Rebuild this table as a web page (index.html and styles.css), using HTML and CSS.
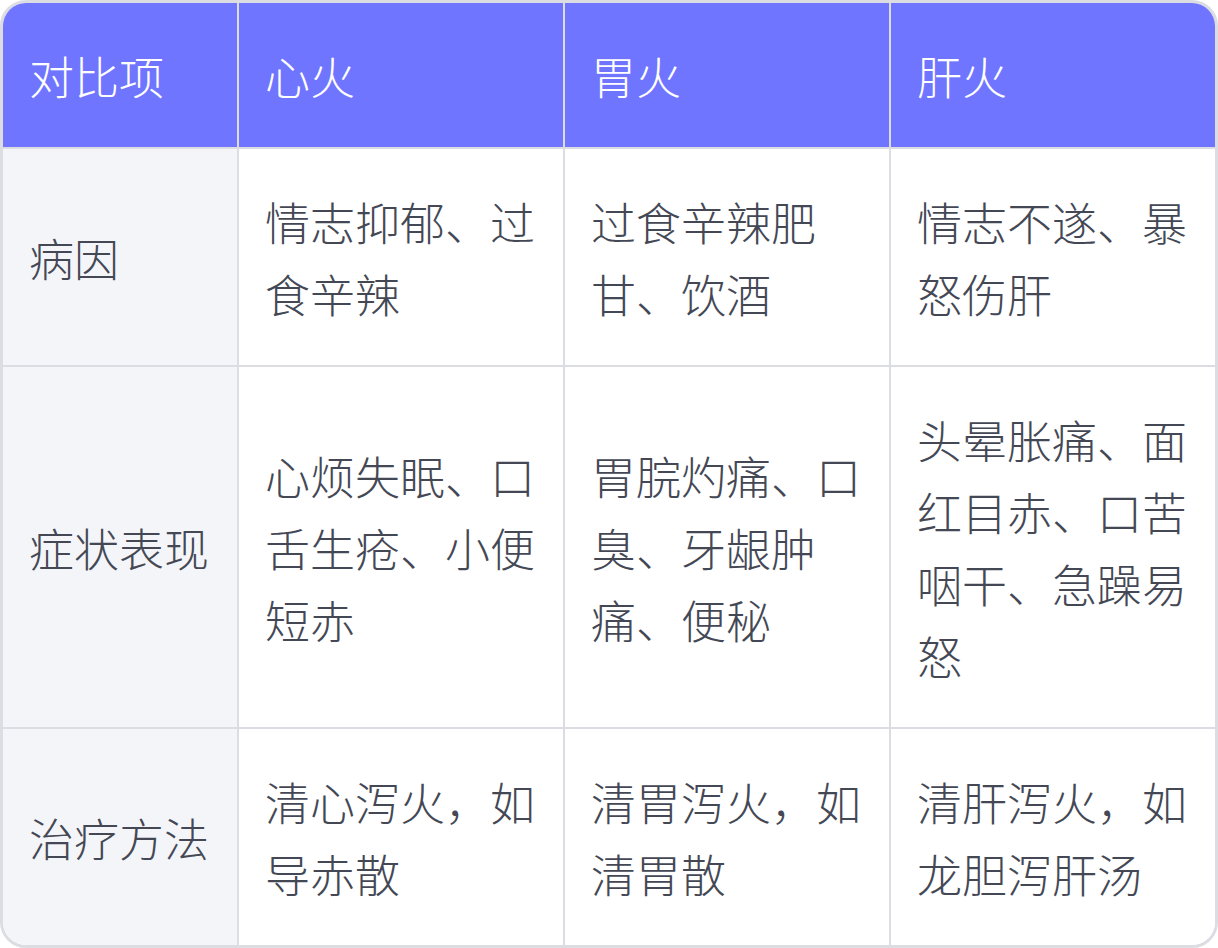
FILE: index.html
```html
<!DOCTYPE html>
<html lang="zh-CN">
<head>
<meta charset="utf-8">
<title>心火 胃火 肝火 对比</title>
<link rel="stylesheet" href="styles.css">
</head>
<body>
<div class="card">
  <table class="cmp">
    <colgroup>
      <col class="c1"><col class="c2"><col class="c3"><col class="c4">
    </colgroup>
    <thead>
      <tr>
        <th>对比项</th>
        <th>心火</th>
        <th>胃火</th>
        <th>肝火</th>
      </tr>
    </thead>
    <tbody>
      <tr>
        <td class="label">病因</td>
        <td>情志抑郁、过食辛辣</td>
        <td>过食辛辣肥甘、饮酒</td>
        <td>情志不遂、暴怒伤肝</td>
      </tr>
      <tr>
        <td class="label">症状表现</td>
        <td>心烦失眠、口舌生疮、小便短赤</td>
        <td>胃脘灼痛、口臭、牙龈肿痛、便秘</td>
        <td>头晕胀痛、面红目赤、口苦咽干、急躁易怒</td>
      </tr>
      <tr>
        <td class="label">治疗方法</td>
        <td>清心泻火，如导赤散</td>
        <td>清胃泻火，如清胃散</td>
        <td>清肝泻火，如龙胆泻肝汤</td>
      </tr>
    </tbody>
  </table>
</div>
</body>
</html>
```

FILE: styles.css
```css
html, body {
  margin: 0;
  padding: 0;
  background: #ffffff;
}

.card {
  width: 1218px;
  height: 948px;
  box-sizing: border-box;
  border: 3px solid #dcdde2;
  border-radius: 26px;
  overflow: hidden;
  background: #ffffff;
}

.cmp {
  width: 100%;
  border-collapse: collapse;
  table-layout: fixed;
  font-family: "Noto Sans CJK SC", "Noto Sans", sans-serif;
  font-size: 45px;
  font-weight: 300;
  line-height: 72px;
}

.c1 { width: 235px; }
.c2 { width: 326px; }
.c3 { width: 326px; }
.c4 { width: 325px; }

.cmp th,
.cmp td {
  padding: 37px 22px 35px 26px;
  border: 2px solid #dcdde2;
  text-align: left;
  vertical-align: middle;
  word-break: break-all;
}

.cmp tr > :first-child { border-left: none; }
.cmp tr > :last-child { border-right: none; }
.cmp thead tr > * { border-top: none; }
.cmp tbody tr:last-child > * { border-bottom: none; }

.cmp th {
  background: #6f75ff;
  color: #ffffff;
  font-weight: 300;
}

.cmp td {
  color: #444855;
  background: #ffffff;
}

.cmp td.label {
  background: #f4f5f9;
}
```
